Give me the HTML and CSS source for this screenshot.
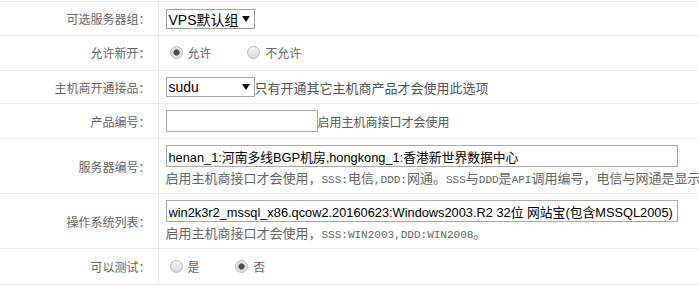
FILE: index.html
```html
<!DOCTYPE html>
<html lang="zh-CN">
<head>
  <meta charset="UTF-8">
  <title>主机商设置</title>
  <link rel="stylesheet" href="styles.css">
</head>
<body>

  <!-- 表单 -->
  <table class="form-table">
    <colgroup>
      <col class="col-label">
      <col>
    </colgroup>
    <tr>
      <td class="label">可选服务器组：</td>
      <td>
        <div class="select-box"><span class="select-text">VPS默认组</span><span class="arrow"></span></div>
      </td>
    </tr>
    <tr class="radio-row">
      <td class="label">允许新开：</td>
      <td>
        <label class="radio"><input type="radio" name="allow" checked>允许</label>
        <label class="radio"><input type="radio" name="allow">不允许</label>
      </td>
    </tr>
    <tr>
      <td class="label">主机商开通接品：</td>
      <td>
        <div class="select-box"><span class="select-text">sudu</span><span class="arrow"></span></div><span class="note">只有开通其它主机商产品才会使用此选项</span>
      </td>
    </tr>
    <tr class="input-row">
      <td class="label">产品编号：</td>
      <td>
        <input type="text" class="input-short" value=""><span class="note small">启用主机商接口才会使用</span>
      </td>
    </tr>
    <tr class="multi-row">
      <td class="label">服务器编号：</td>
      <td>
        <input type="text" class="input-long" value="henan_1:河南多线BGP机房,hongkong_1:香港新世界数据中心">
        <div class="hint">启用主机商接口才会使用，<span class="en">SSS:</span>电信<span class="en">,DDD:</span>网通。<span class="en">SSS</span>与<span class="en">DDD</span>是<span class="en">API</span>调用编号，电信与网通是显示名称。</div>
      </td>
    </tr>
    <tr class="multi-row">
      <td class="label">操作系统列表：</td>
      <td>
        <input type="text" class="input-long" value="win2k3r2_mssql_x86.qcow2.20160623:Windows2003.R2 32位 网站宝(包含MSSQL2005)">
        <div class="hint">启用主机商接口才会使用，<span class="en">SSS:WIN2003,DDD:WIN2008</span>。</div>
      </td>
    </tr>
    <tr class="radio-row last">
      <td class="label">可以测试：</td>
      <td>
        <label class="radio"><input type="radio" name="test">是</label>
        <label class="radio"><input type="radio" name="test" checked>否</label>
      </td>
    </tr>
  </table>

</body>
</html>
```

FILE: styles.css
```css
body {
  margin: 0;
  padding-top: 1px;
  overflow: hidden;
  background: #fff;
  font-family: "Noto Sans CJK SC", sans-serif;
  font-size: 12px;
  color: #666;
}

/* 表格 */
.form-table {
  border-collapse: collapse;
  table-layout: fixed;
  width: 100%;
  border-top: 1px solid #ebebeb;
}

.col-label {
  width: 158px;
}

.form-table td {
  height: 20px;
  padding: 6px 7px;
  border-bottom: 1px solid #ebebeb;
  vertical-align: middle;
  white-space: nowrap;
}

.form-table td.label {
  text-align: right;
  padding-right: 7px;
  border-right: 1px solid #ebebeb;
  color: #666;
}

.radio-row td {
  height: 22px;
}

.radio-row.last td {
  height: 23px;
}

.input-row td {
  height: 22px;
}

.multi-row td {
  height: 42px;
}

/* 下拉框 */
.select-box {
  display: inline-flex;
  align-items: center;
  justify-content: space-between;
  box-sizing: border-box;
  width: 89px;
  height: 20px;
  padding: 0 4px 0 2px;
  border: 1px solid #a0a0a0;
  background: #fff;
  vertical-align: middle;
  font-family: "Liberation Sans", "Noto Sans CJK SC", sans-serif;
  font-size: 14px;
  color: #000;
}

.arrow {
  width: 0;
  height: 0;
  border-left: 4px solid transparent;
  border-right: 4px solid transparent;
  border-top: 6px solid #111;
}

.note {
  vertical-align: middle;
  font-size: 13px;
  color: #555;
}

.note.small {
  font-size: 12px;
}

/* 单选框 */
.radio {
  display: inline-flex;
  align-items: center;
  margin-left: 4px;
  margin-right: 29px;
  color: #666;
}

.radio input {
  appearance: none;
  -webkit-appearance: none;
  box-sizing: border-box;
  width: 13px;
  height: 13px;
  margin: 0 5px 0 0;
  border: 1px solid #b9b9b9;
  border-radius: 50%;
  background: linear-gradient(#f4f4f4, #d8d8d8);
}

.radio input:checked {
  background: radial-gradient(circle, #4a4a4a 0, #4a4a4a 2.2px, #8a8a8a 3px, #dcdcdc 3.6px, #ececec 6px);
}

/* 输入框 */
input[type="text"] {
  box-sizing: border-box;
  height: 22px;
  margin: 0;
  padding: 1px 1px 1px 2px;
  border: 1px solid #a9a9a9;
  vertical-align: middle;
  font-family: "Liberation Sans", "Noto Sans CJK SC", sans-serif;
  font-size: 12.8px;
  color: #000;
  outline: none;
}

.input-short {
  width: 152px;
}

.input-long {
  display: block;
  width: 512px;
}

.hint {
  height: 18px;
  margin-top: 2px;
  line-height: 18px;
  font-size: 13px;
  color: #666;
  overflow: visible;
}

.hint .en {
  font-family: "Liberation Mono", monospace;
  font-size: 11px;
  line-height: 12px;
}
```
